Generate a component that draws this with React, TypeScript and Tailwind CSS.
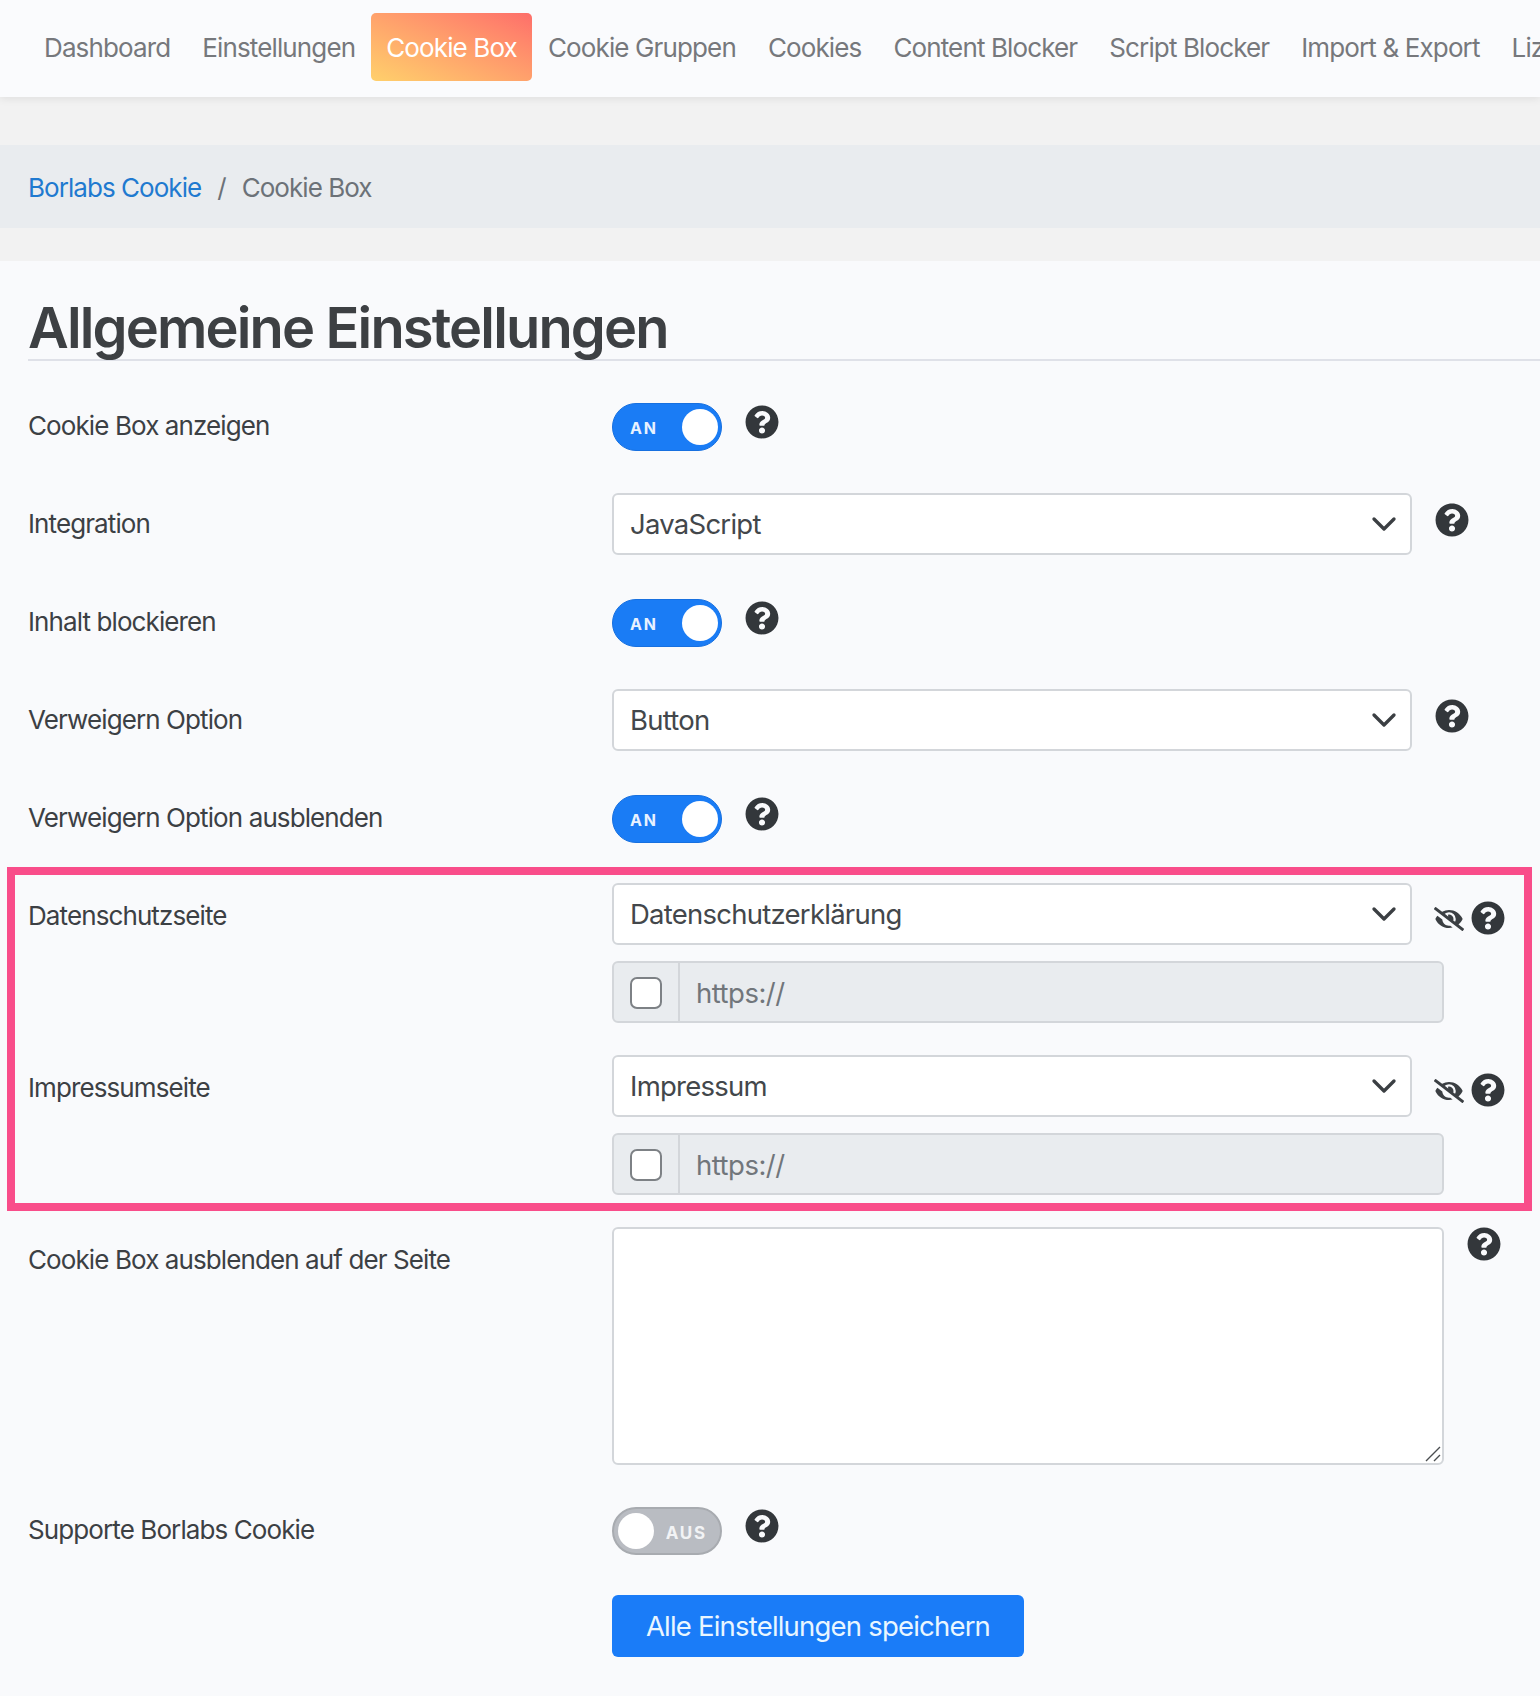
import { FaEyeSlash, FaQuestionCircle } from "react-icons/fa";
import { ChevronDown } from "lucide-react";

const navItems = [
  "Dashboard",
  "Einstellungen",
  "Cookie Box",
  "Cookie Gruppen",
  "Cookies",
  "Content Blocker",
  "Script Blocker",
  "Import & Export",
  "Lizenz",
];

function Help({ className }: { className: string }) {
  return <FaQuestionCircle className={`w-[34px] h-[34px] shrink-0 text-[#33373b] ${className}`} />;
}

function Toggle({ on }: { on: boolean }) {
  if (on) {
    return (
      <div className="w-[110px] h-[48px] rounded-full bg-[#1a7cf5] border border-[#1770e0] flex items-center justify-between pl-[17px] pr-[3px] shrink-0">
        <span className="pt-[2px] text-[16px] font-bold tracking-[1.8px] text-[#e8f2ff]">AN</span>
        <span className="w-[36px] h-[36px] rounded-full bg-white" />
      </div>
    );
  }
  return (
    <div className="w-[110px] h-[48px] rounded-full bg-[#b9bcc2] border-2 border-[#a8abb0] flex items-center justify-between pl-[4px] pr-[13px] shrink-0">
      <span className="w-[36px] h-[36px] rounded-full bg-white" />
      <span className="pt-[5px] text-[17px] font-bold tracking-[1.8px] text-[#f2f3f5]">AUS</span>
    </div>
  );
}

function SelectBox({ value }: { value: string }) {
  return (
    <div className="w-[800px] h-[62px] shrink-0 bg-white border-2 border-[#d3d6da] rounded-[6px] flex items-center justify-between pl-[16px] pr-[6px] text-[27.5px] tracking-[-0.75px] text-[#43474b]">
      <span className="pt-[2px]">{value}</span>
      <ChevronDown className="w-[40px] h-[40px] text-[#3b3f43]" strokeWidth={2} />
    </div>
  );
}

function UrlInput() {
  return (
    <div className="w-[832px] h-[62px] mt-[16px] bg-[#e9ecef] border-2 border-[#d3d6da] rounded-[6px] flex items-center text-[27.5px] tracking-[-0.5px] text-[#71767b]">
      <div className="w-[66px] h-full pt-[1px] border-r-2 border-[#d3d6da] flex items-center justify-center">
        <span className="w-[32px] h-[32px] bg-white border-2 border-[#7d8185] rounded-[7px]" />
      </div>
      <span className="pl-[16px] pt-[3px]">https://</span>
    </div>
  );
}

function Label({ text, tall, className }: { text: string; tall?: boolean; className?: string }) {
  return (
    <div className={`w-[584px] shrink-0 flex items-center text-[26px] tracking-[-0.9px] text-[#3c4044] ${tall ? "h-[62px]" : "h-[48px] pb-[3px]"} ${className ?? ""}`}>
      {text}
    </div>
  );
}

function ToggleRow({ label, on, className }: { label: string; on: boolean; className: string }) {
  return (
    <div className={`flex items-start pl-[28px] ${className}`}>
      <Label text={label} />
      <Toggle on={on} />
      <Help className="ml-[23px] mt-[2px]" />
    </div>
  );
}

function SelectRow({ label, value }: { label: string; value: string }) {
  return (
    <div className="flex items-start pl-[28px] mb-[44px]">
      <Label text={label} tall className="pb-[2px]" />
      <SelectBox value={value} />
      <Help className="ml-[23px] mt-[10px]" />
    </div>
  );
}

function PageRow({ label, value, className }: { label: string; value: string; className: string }) {
  return (
    <div className={`flex items-start pl-[13px] ${className}`}>
      <Label text={label} tall className="pt-[2px]" />
      <div>
        <div className="flex items-start">
          <SelectBox value={value} />
          <FaEyeSlash className="w-[30px] h-[26px] ml-[22px] mt-[23px] text-[#3b3f43] shrink-0" />
          <Help className="ml-[7px] mt-[18px]" />
        </div>
        <UrlInput />
      </div>
    </div>
  );
}

export default function App() {
  return (
    <div className="w-[1540px] h-[1696px] overflow-hidden bg-[#f2f2f2] font-['Inter',sans-serif]">
      <nav className="h-[97px] bg-[#fafbfd] shadow-[0_2px_8px_rgba(0,0,0,0.08)] flex items-start pl-[28px] pt-[13px] overflow-hidden">
        {navItems.map((item) =>
          item === "Cookie Box" ? (
            <a key={item} className="h-[68px] px-[15px] flex items-center shrink-0 rounded-[5px] text-[26px] tracking-[-0.87px] text-white bg-gradient-to-tr from-[#ffd06b] to-[#fd6e6a]">
              {item}
            </a>
          ) : (
            <a key={item} className="h-[68px] px-[16px] flex items-center shrink-0 text-[26px] tracking-[-0.87px] text-[#76787c]">
              {item}
            </a>
          )
        )}
      </nav>

      <div className="h-[83px] mt-[48px] pt-[2px] bg-[#e9ecef] flex items-center pl-[28px] text-[26px] tracking-[-0.95px]">
        <span className="text-[#1f7ad0]">Borlabs Cookie</span>
        <span className="mx-[16px] text-[#6c7278]">/</span>
        <span className="text-[#6c7278]">Cookie Box</span>
      </div>

      <main className="mt-[33px] h-[1435px] bg-[#f9fafc]">
        <div className="pl-[28px] pt-[27px]">
          <h1 className="h-[73px] border-b-2 border-[#dfe1e8] text-[56px] leading-[80px] font-semibold tracking-[-1.85px] text-[#3d4043]">
            Allgemeine Einstellungen
          </h1>
        </div>

        <ToggleRow label="Cookie Box anzeigen" on className="mt-[42px] mb-[42px]" />
        <SelectRow label="Integration" value="JavaScript" />
        <ToggleRow label="Inhalt blockieren" on className="mb-[42px]" />
        <SelectRow label="Verweigern Option" value="Button" />
        <ToggleRow label="Verweigern Option ausblenden" on className="mb-[24px]" />

        <section className="ml-[7px] w-[1525px] border-[8px] border-[#f94d8a] pt-[8px] pb-[8px]">
          <PageRow label="Datenschutzseite" value="Datenschutzerklärung" className="mb-[32px]" />
          <PageRow label="Impressumseite" value="Impressum" className="" />
        </section>

        <div className="flex items-start pl-[28px] mt-[16px]">
          <Label text="Cookie Box ausblenden auf der Seite" tall className="pt-[3px]" />
          <div className="relative w-[832px] h-[238px] shrink-0">
            <textarea className="block w-full h-full bg-white border-2 border-[#d3d6da] rounded-[6px] outline-none resize-none" />
            <svg className="absolute right-[3px] bottom-[3px] w-[16px] h-[16px]" viewBox="0 0 16 16" fill="none" stroke="#4a4d50" strokeWidth="1.4">
              <path d="M1 15 L15 1 M9 15 L15 9" />
            </svg>
          </div>
          <Help className="ml-[23px]" />
        </div>

        <div className="flex items-start pl-[28px] mt-[42px]">
          <Label text="Supporte Borlabs Cookie" />
          <Toggle on={false} />
          <Help className="ml-[23px] mt-[2px]" />
        </div>

        <div className="pl-[612px] mt-[40px]">
          <button className="w-[412px] h-[62px] pt-[2px] bg-[#1a7cf8] rounded-[6px] text-[27.5px] tracking-[-0.8px] text-[#e9f6ff]">
            Alle Einstellungen speichern
          </button>
        </div>
      </main>
    </div>
  );
}
